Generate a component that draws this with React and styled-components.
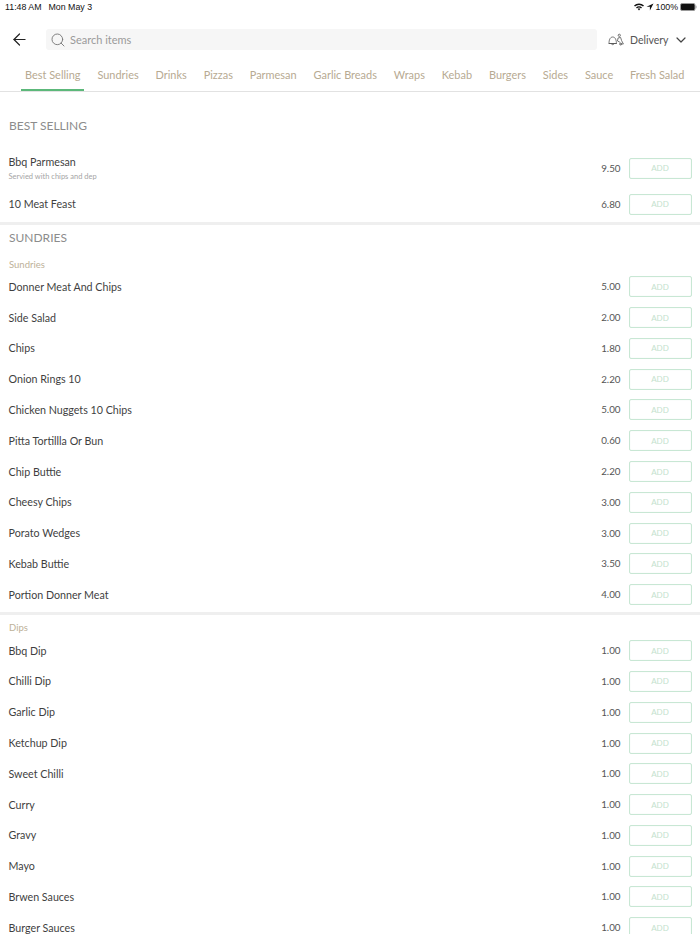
import styled, { createGlobalStyle } from 'styled-components'
import { ArrowLeft, Search, ChevronDown } from 'lucide-react'

const GlobalStyle = createGlobalStyle`
    html, body {
        margin: 0;
        padding: 0;
        background: #fff;
        height: 934px;
        overflow: hidden;
    }

    body {
        font-family: "Lato", "Open Sans", sans-serif;
        color: #3d3d3d;
    }
`

const Page = styled.div`
    width: 700px;
    height: 934px;
    overflow: hidden;
`

const StatusBar = styled.div`
    height: 14px;
    padding: 0 3px 0 5px;
    display: flex;
    justify-content: space-between;
    align-items: center;
    font-family: "Liberation Sans", sans-serif;
    font-size: 8.8px;
    color: #111;
`

const StatusLeft = styled.div`
    display: flex;
    gap: 7px;
`

const StatusRight = styled.div`
    display: flex;
    align-items: center;
    gap: 2px;
`

const TopBar = styled.div`
    height: 21px;
    margin-top: 15px;
    padding-left: 10px;
    display: flex;
    align-items: center;
`

const BackButton = styled.button`
    width: 36px;
    padding: 0;
    border: 0;
    background: none;
    display: flex;
    color: #222;
`

const SearchBox = styled.div`
    width: 551px;
    height: 21px;
    box-sizing: border-box;
    padding-left: 4px;
    display: flex;
    align-items: center;
    gap: 4px;
    background: #f6f6f6;
    border-radius: 3px;
    font-size: 11px;
    color: #9a9a9a;
`

const DeliveryPicker = styled.div`
    margin-left: 11px;
    display: flex;
    align-items: center;
    font-size: 10.5px;
    color: #555;

    span {
        margin: 0 4px 0 6px;
    }
`

const Tabs = styled.nav`
    height: 42px;
    box-sizing: border-box;
    padding-left: 21px;
    display: flex;
    border-bottom: 1px solid #e2e2e2;
    white-space: nowrap;
`

const Tab = styled.div`
    height: 41px;
    box-sizing: border-box;
    padding: 18px 4px 0;
    margin-right: 8.9px;
    font-size: 10.95px;
    color: #b7aa92;
    border-bottom: ${({ $active }) => ($active ? '2px solid #5cb87a' : '0')};
`

const SectionTitle = styled.h2`
    margin: 0;
    padding: 0 9px;
    font-size: 12px;
    line-height: 15px;
    font-weight: 400;
    color: #8c8c8c;
`

const BestSelling = styled.section`
    padding: 25.5px 0 2px;
`

const BestList = styled.div`
    margin-top: 20.5px;
    display: flex;
    flex-direction: column;
    gap: 5px;
`

const Sundries = styled.section`
    padding: 5.5px 0 2.4px;

    ${SectionTitle} {
        margin-bottom: 6.5px;
    }
`

const Divider = styled.div`
    height: 3px;
    background: #efefef;
`

const GroupTitle = styled.div`
    padding: 7px 9px 1px;
    font-size: 9.5px;
    line-height: 12px;
    color: #bdb199;
`

const Row = styled.div`
    height: 30.77px;
    padding: 0 8.5px;
    display: flex;
    align-items: center;
    justify-content: space-between;
`

const ItemText = styled.div`
    padding-bottom: 1px;
`

const ItemName = styled.div`
    font-size: 10.7px;
    line-height: 13px;
    color: #3f3f3f;
`

const ItemNote = styled.div`
    margin-top: 4px;
    font-size: 7.5px;
    line-height: 9px;
    color: #a5a5a5;
`

const PriceBox = styled.div`
    display: flex;
    align-items: center;
    gap: 8px;
    font-size: 9.8px;
    color: #555;
`

const Price = styled.span`
    padding-bottom: 1px;
`

const AddButton = styled.button`
    width: 63px;
    height: 21px;
    padding: 0;
    background: #fff;
    border: 1px solid #c8e7d4;
    border-radius: 2px;
    box-shadow: inset 0 0 1px #d4ecdd;
    font-family: inherit;
    font-size: 8px;
    color: #c4e2ce;
`

const tabs = ['Best Selling', 'Sundries', 'Drinks', 'Pizzas', 'Parmesan', 'Garlic Breads', 'Wraps', 'Kebab', 'Burgers', 'Sides', 'Sauce', 'Fresh Salad']

const sundries = [
    ['Donner Meat And Chips', '5.00'],
    ['Side Salad', '2.00'],
    ['Chips', '1.80'],
    ['Onion Rings 10', '2.20'],
    ['Chicken Nuggets 10 Chips', '5.00'],
    ['Pitta Tortillla Or Bun', '0.60'],
    ['Chip Buttie', '2.20'],
    ['Cheesy Chips', '3.00'],
    ['Porato Wedges', '3.00'],
    ['Kebab Buttie', '3.50'],
    ['Portion Donner Meat', '4.00'],
]

const dips = ['Bbq Dip', 'Chilli Dip', 'Garlic Dip', 'Ketchup Dip', 'Sweet Chilli', 'Curry', 'Gravy', 'Mayo', 'Brwen Sauces', 'Burger Sauces']

function Item({ name, note, price }) {
    return (
        <Row>
            <ItemText>
                <ItemName>{name}</ItemName>
                {note && <ItemNote>{note}</ItemNote>}
            </ItemText>
            <PriceBox>
                <Price>{price}</Price>
                <AddButton>ADD</AddButton>
            </PriceBox>
        </Row>
    )
}

function DeliveryIcon() {
    return (
        <svg width="16" height="13" viewBox="0 0 16 13" fill="none" stroke="#555" strokeWidth="0.8">
            <path d="M1 10.5c0-3 .8-6.5 3.7-6.5s3.7 3.5 3.7 6.5zM.6 10.5h8.2M3.5 10.5a1.2 1.2 0 0 0 2.4 0" />
            <path d="M11.3 1.2a1.1 1.1 0 1 1 0 2.2a1.1 1.1 0 1 1 0-2.2zM10 5l2.6-.6 1 3.2 1.8 3.4h-3.2M10 5l-.5 3 2.4 1.2" />
            <circle cx="12.6" cy="11" r="1" />
        </svg>
    )
}

function App() {
    return (
        <Page>
            <GlobalStyle />
            <StatusBar>
                <StatusLeft><span>11:48 AM</span><span>Mon May 3</span></StatusLeft>
                <StatusRight>
                    <svg width="10" height="8" viewBox="0 0 10 8"><path d="M0 2.5a7 7 0 0 1 10 0L9 3.6a5.6 5.6 0 0 0-8 0zM2 4.4a4.2 4.2 0 0 1 6 0L7 5.4a2.8 2.8 0 0 0-4 0zM3.8 6a1.6 1.6 0 0 1 2.4 0L5 7.6z" fill="#111" /></svg>
                    <svg width="8" height="8" viewBox="0 0 8 8"><path d="M7.5.5L.5 3.8h3.4v3.6z" fill="#111" /></svg>
                    <span>100%</span>
                    <svg width="17" height="8" viewBox="0 0 17 8"><rect x=".5" y=".5" width="14.5" height="7" rx="1.5" fill="#111" stroke="#999" /><rect x="15.5" y="2.7" width="1" height="2.6" fill="#999" /></svg>
                </StatusRight>
            </StatusBar>
            <TopBar>
                <BackButton><ArrowLeft size={19} strokeWidth={1.5} /></BackButton>
                <SearchBox><Search size={16} color="#777" strokeWidth={1.4} />Search items</SearchBox>
                <DeliveryPicker><DeliveryIcon /><span>Delivery</span><ChevronDown size={16} strokeWidth={1.8} color="#444" /></DeliveryPicker>
            </TopBar>
            <Tabs>
                {tabs.map((tab, i) => <Tab key={tab} $active={i === 0}>{tab}</Tab>)}
            </Tabs>
            <BestSelling>
                <SectionTitle>BEST SELLING</SectionTitle>
                <BestList>
                    <Item name="Bbq Parmesan" note="Servied with chips and dep" price="9.50" />
                    <Item name="10 Meat Feast" price="6.80" />
                </BestList>
            </BestSelling>
            <Divider />
            <Sundries>
                <SectionTitle>SUNDRIES</SectionTitle>
                <GroupTitle>Sundries</GroupTitle>
                {sundries.map(([name, price]) => <Item key={name} name={name} price={price} />)}
            </Sundries>
            <Divider />
            <GroupTitle>Dips</GroupTitle>
            {dips.map(name => <Item key={name} name={name} price="1.00" />)}
        </Page>
    )
}

export default App
